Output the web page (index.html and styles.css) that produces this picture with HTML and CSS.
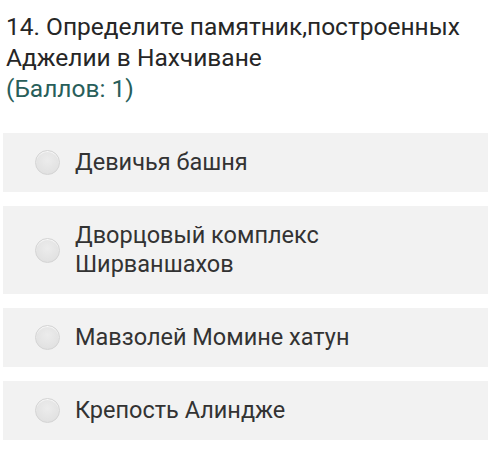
FILE: index.html
```html
<!DOCTYPE html>
<html lang="ru">
<head>
<meta charset="utf-8">
<title>Вопрос 14</title>
<link rel="stylesheet" href="styles.css">
</head>
<body>
<div class="question">
  <p class="question-text">14. Определите памятник,построенных Аджелии в Нахчиване</p>
  <p class="question-score">(Баллов: 1)</p>
</div>
<ul class="options">
  <li class="option"><span class="radio"></span><span class="label">Девичья башня</span></li>
  <li class="option"><span class="radio"></span><span class="label">Дворцовый комплекс<br>Ширваншахов</span></li>
  <li class="option"><span class="radio"></span><span class="label">Мавзолей Момине хатун</span></li>
  <li class="option"><span class="radio"></span><span class="label">Крепость Алиндже</span></li>
</ul>
</body>
</html>
```

FILE: styles.css
```css
html, body {
  margin: 0;
  padding: 0;
  background: #ffffff;
}

body {
  font-family: Roboto, "Noto Sans", sans-serif;
  width: 500px;
  height: 462px;
  overflow: hidden;
}

.question {
  padding: 11px 8px 0 6px;
}

.question-text,
.question-score {
  margin: 0;
  font-size: 24.5px;
  line-height: 31px;
}

.question-text {
  color: #262626;
}

.question-score {
  color: #285e5a;
}

.options {
  list-style: none;
  margin: 29px 12px 0 3px;
  padding: 0;
  display: flex;
  flex-direction: column;
  gap: 14px;
}

.option {
  display: flex;
  align-items: center;
  gap: 15px;
  background: #f2f2f2;
  padding: 15px 12px 15px 32px;
  min-height: 29px;
}

.radio {
  flex: none;
  width: 23px;
  height: 23px;
  border-radius: 50%;
  border: 1px solid #d4d4d4;
  background: radial-gradient(circle at 50% 40%, #ececec 0%, #e2e2e2 70%, #d9d9d9 100%);
  box-shadow: inset 0 1px 1px rgba(255, 255, 255, 0.8);
}

.label {
  font-size: 23.5px;
  line-height: 29px;
  color: #333333;
}
```
